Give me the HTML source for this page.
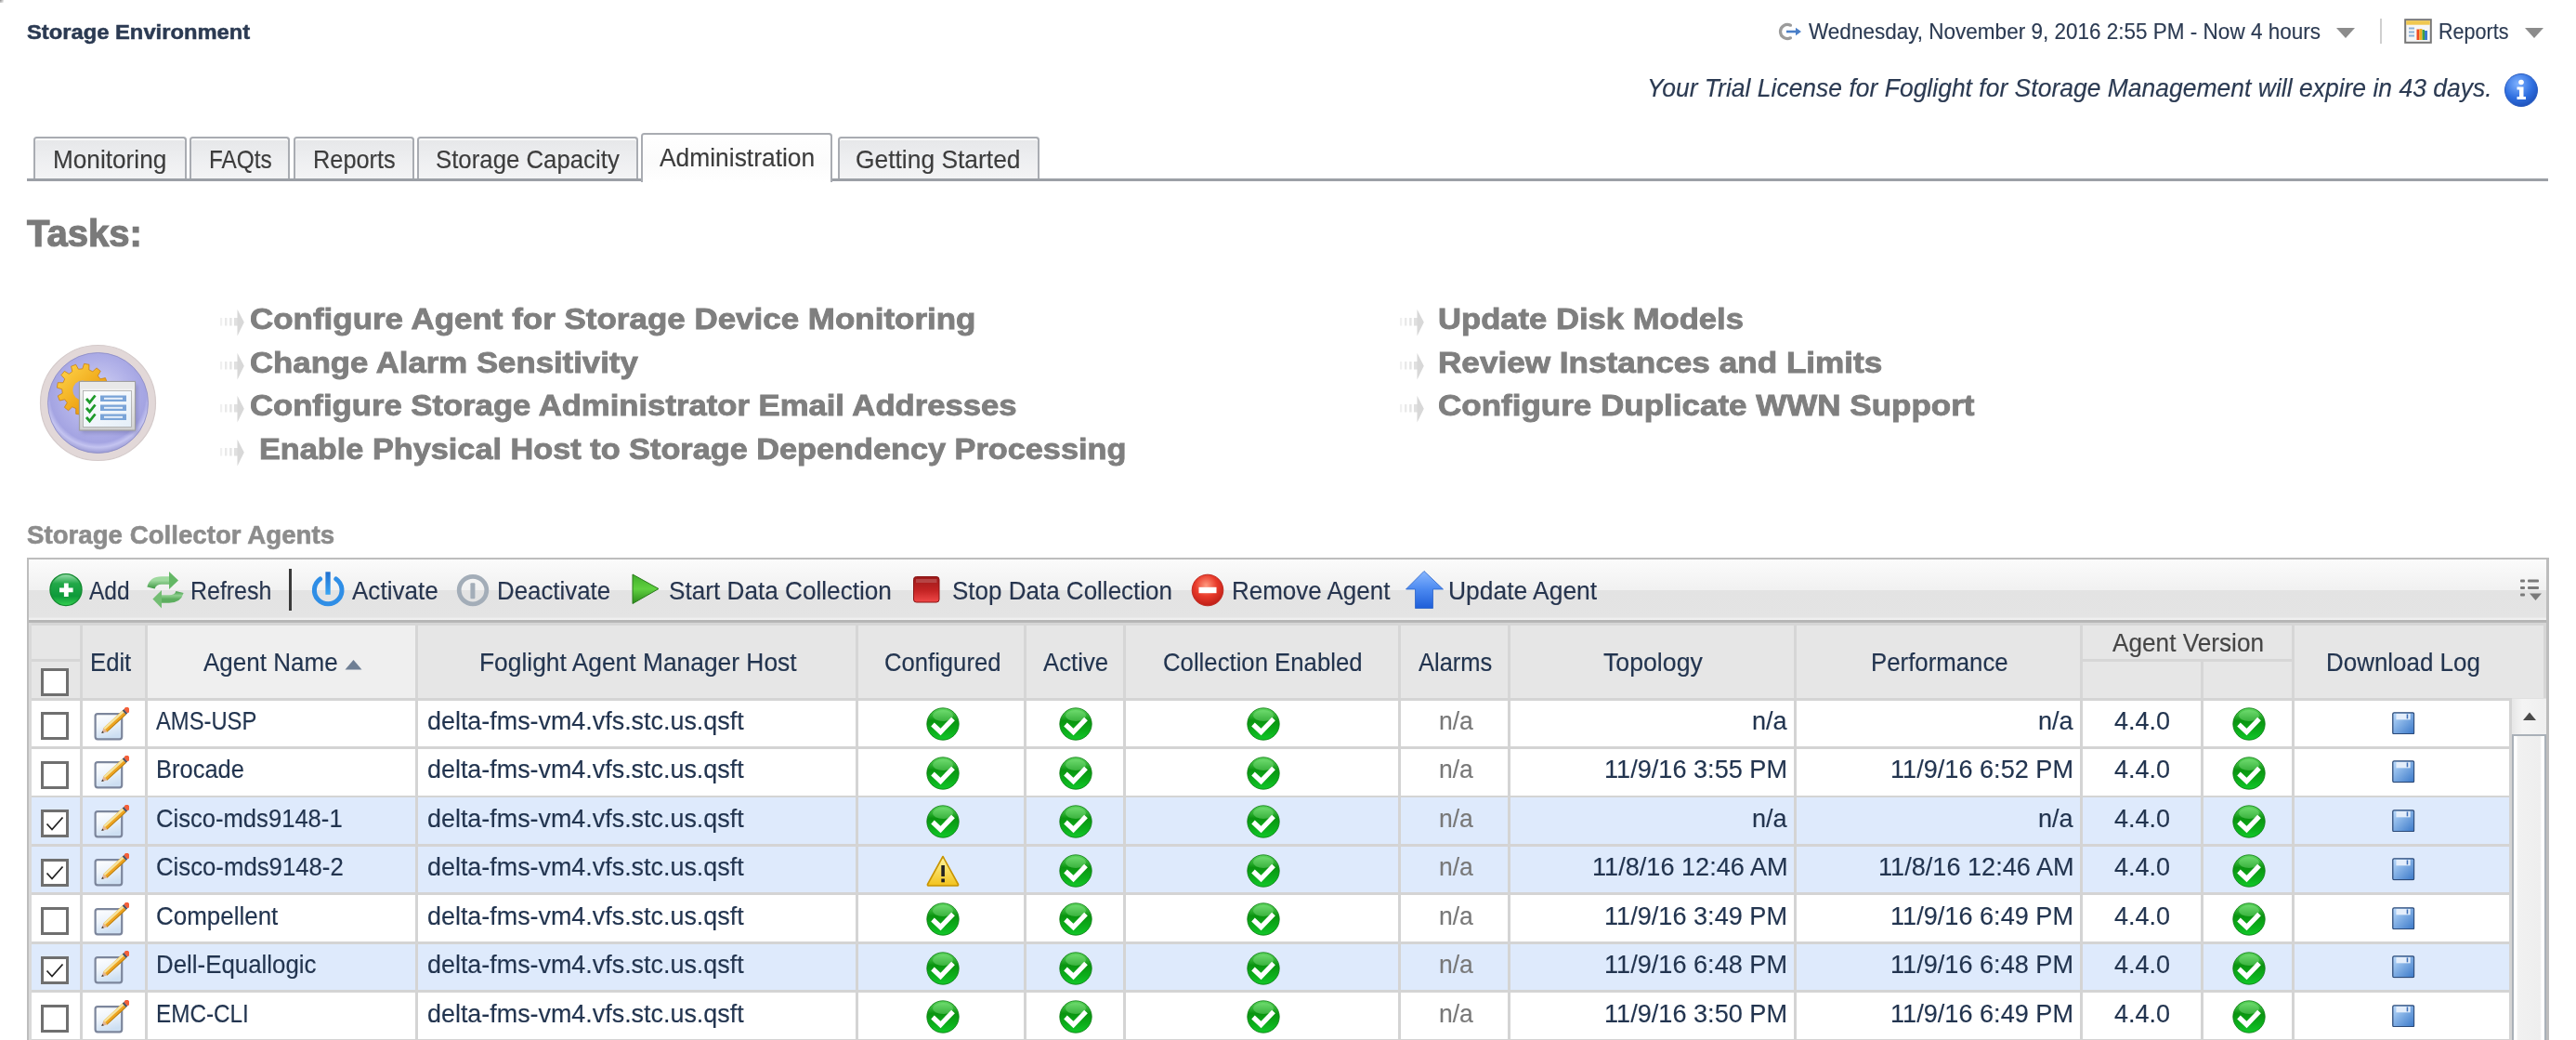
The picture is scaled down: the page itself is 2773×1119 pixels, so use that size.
<!DOCTYPE html>
<html><head><meta charset="utf-8"><title>Storage Environment</title>
<style>
html,body{margin:0;padding:0;background:#fff;}
body{width:2773px;height:1119px;overflow:hidden;position:relative;font-family:"Liberation Sans",sans-serif;}
.t{position:absolute;white-space:pre;}
</style></head><body>
<div style="position:absolute;left:0px;top:0px;width:4px;height:3px;background:radial-gradient(circle at 0 0,#888 0,#bbb 40%,rgba(255,255,255,0) 100%)"></div>
<div class="t" style="left:28.90px;top:23.80px;font-size:22.24px;line-height:22.24px;color:#2b3a52;font-weight:bold;transform:scaleX(1.0682);transform-origin:0 0;-webkit-text-stroke:0.5px #2b3a52;">Storage Environment</div>
<svg style="position:absolute;left:1914px;top:22px" width="28" height="24" viewBox="0 0 28 24">
<path d="M13.5 5.2 A7.6 7.6 0 1 0 13.5 18.8" fill="none" stroke="#8a8a8a" stroke-width="3.2" stroke-linecap="round" opacity="0.85"/>
<path d="M9 12 H21.5" stroke="#4a7fc8" stroke-width="2.6"/>
<path d="M19 7.8 L25 12 L19 16.2 Z" fill="#4a7fc8"/>
</svg>
<div class="t" style="left:1947.30px;top:22.00px;font-size:24.48px;line-height:24.48px;color:#2b3a52;transform:scaleX(0.9200);transform-origin:0 0;-webkit-text-stroke:0.15px #2b3a52;">Wednesday, November 9, 2016 2:55 PM - Now 4 hours</div>
<svg style="position:absolute;left:2514px;top:29px" width="22" height="13" viewBox="0 0 22 13"><path d="M1 1 H21 L11 12 Z" fill="#8c8c8c"/></svg>
<div style="position:absolute;left:2562px;top:20px;width:2px;height:27px;background:#cfcfcf"></div>
<svg style="position:absolute;left:2588px;top:20px" width="30" height="27" viewBox="0 0 30 27">
<rect x="1.2" y="1.2" width="27.6" height="24.6" fill="#f6f6f6" stroke="#767676" stroke-width="2"/>
<rect x="2.2" y="2.2" width="25.6" height="4.5" fill="#f0c850"/>
<rect x="5" y="9.5" width="6" height="2" fill="#8ab0d8"/><rect x="5" y="13.5" width="6" height="2" fill="#8ab0d8"/><rect x="5" y="17.5" width="6" height="2" fill="#8ab0d8"/>
<rect x="13.5" y="11.5" width="3" height="11.5" fill="#f04a20"/><rect x="16.5" y="11" width="3" height="12" fill="#f0b020"/><rect x="19.5" y="12" width="2.5" height="11" fill="#40a040"/><rect x="22" y="13" width="3" height="10" fill="#3a7ad0"/>
</svg>
<div class="t" style="left:2624.60px;top:22.00px;font-size:24.48px;line-height:24.48px;color:#2b3a52;transform:scaleX(0.8800);transform-origin:0 0;-webkit-text-stroke:0.15px #2b3a52;">Reports</div>
<svg style="position:absolute;left:2717px;top:29px" width="22" height="13" viewBox="0 0 22 13"><path d="M1 1 H21 L11 12 Z" fill="#8c8c8c"/></svg>
<div class="t" style="left:1773.30px;top:81.00px;font-size:28.05px;line-height:28.05px;color:#2b3a52;font-style:italic;transform:scaleX(0.9446);transform-origin:0 0;-webkit-text-stroke:0.15px #2b3a52;">Your Trial License for Foglight for Storage Management will expire in 43 days.</div>
<svg style="position:absolute;left:2695px;top:78px" width="38" height="38" viewBox="0 0 38 38">
<defs><radialGradient id="ig" cx="0.4" cy="0.3" r="0.75"><stop offset="0" stop-color="#7fb2ff"/><stop offset="0.6" stop-color="#2f6fe0"/><stop offset="1" stop-color="#1c4fb8"/></radialGradient></defs>
<circle cx="19" cy="19" r="17.5" fill="url(#ig)" stroke="#2a5cc0" stroke-width="1"/>
<circle cx="19" cy="10.5" r="2.8" fill="#fff"/>
<path d="M14.5 15.5 H21.5 V26 H24 V29 H14.5 V26 H17 V18.5 H14.5 Z" fill="#fff"/>
</svg>
<div style="position:absolute;left:36px;top:147.2px;width:160.7px;height:43.80000000000001px;border:2.5px solid #a9acb2;border-bottom:none;border-radius:3.5px 3.5px 0 0;background:linear-gradient(#e6e7e9,#eeeff1 55%,#f4f4f5);box-sizing:content-box;box-shadow:inset 0 2px 0 #fafafa"></div>
<div class="t" style="left:57.00px;top:158.00px;font-size:27.74px;line-height:27.74px;color:#3c3c3c;transform:scaleX(0.9441);transform-origin:0 0;-webkit-text-stroke:0.15px #3c3c3c;">Monitoring</div>
<div style="position:absolute;left:204px;top:147.2px;width:104px;height:43.80000000000001px;border:2.5px solid #a9acb2;border-bottom:none;border-radius:3.5px 3.5px 0 0;background:linear-gradient(#e6e7e9,#eeeff1 55%,#f4f4f5);box-sizing:content-box;box-shadow:inset 0 2px 0 #fafafa"></div>
<div class="t" style="left:224.70px;top:158.00px;font-size:27.74px;line-height:27.74px;color:#3c3c3c;transform:scaleX(0.8792);transform-origin:0 0;-webkit-text-stroke:0.15px #3c3c3c;">FAQts</div>
<div style="position:absolute;left:316.3px;top:147.2px;width:125.39999999999998px;height:43.80000000000001px;border:2.5px solid #a9acb2;border-bottom:none;border-radius:3.5px 3.5px 0 0;background:linear-gradient(#e6e7e9,#eeeff1 55%,#f4f4f5);box-sizing:content-box;box-shadow:inset 0 2px 0 #fafafa"></div>
<div class="t" style="left:337.30px;top:158.00px;font-size:27.74px;line-height:27.74px;color:#3c3c3c;transform:scaleX(0.9136);transform-origin:0 0;-webkit-text-stroke:0.15px #3c3c3c;">Reports</div>
<div style="position:absolute;left:449.4px;top:147.2px;width:233.20000000000005px;height:43.80000000000001px;border:2.5px solid #a9acb2;border-bottom:none;border-radius:3.5px 3.5px 0 0;background:linear-gradient(#e6e7e9,#eeeff1 55%,#f4f4f5);box-sizing:content-box;box-shadow:inset 0 2px 0 #fafafa"></div>
<div class="t" style="left:469.00px;top:158.00px;font-size:27.74px;line-height:27.74px;color:#3c3c3c;transform:scaleX(0.9297);transform-origin:0 0;-webkit-text-stroke:0.15px #3c3c3c;">Storage Capacity</div>
<div style="position:absolute;left:901.6px;top:147.2px;width:213.39999999999998px;height:43.80000000000001px;border:2.5px solid #a9acb2;border-bottom:none;border-radius:3.5px 3.5px 0 0;background:linear-gradient(#e6e7e9,#eeeff1 55%,#f4f4f5);box-sizing:content-box;box-shadow:inset 0 2px 0 #fafafa"></div>
<div class="t" style="left:921.00px;top:158.00px;font-size:27.74px;line-height:27.74px;color:#3c3c3c;transform:scaleX(0.9515);transform-origin:0 0;-webkit-text-stroke:0.15px #3c3c3c;">Getting Started</div>
<div style="position:absolute;left:29px;top:191.8px;width:2714px;height:3px;background:#9ca0a6"></div>
<div style="position:absolute;left:689.7px;top:142.6px;width:202.5999999999999px;height:51.400000000000006px;border:2.5px solid #a9acb2;border-bottom:none;border-radius:3.5px 3.5px 0 0;background:linear-gradient(#ffffff,#fbfbfb 60%,#ffffff);"></div>
<div class="t" style="left:709.50px;top:155.70px;font-size:28.05px;line-height:28.05px;color:#3c3c3c;transform:scaleX(0.9409);transform-origin:0 0;-webkit-text-stroke:0.15px #3c3c3c;">Administration</div>
<div class="t" style="left:28.90px;top:231.00px;font-size:40.8px;line-height:40.8px;color:#7a7a7a;font-weight:bold;transform:scaleX(0.9820);transform-origin:0 0;-webkit-text-stroke:1.2px #7a7a7a;">Tasks:</div>
<div class="t" style="left:269.00px;top:327.30px;font-size:32.13px;line-height:32.13px;color:#7f7f7f;font-weight:bold;transform:scaleX(1.0882);transform-origin:0 0;-webkit-text-stroke:0.9px #7f7f7f;">Configure Agent for Storage Device Monitoring</div>
<svg style="position:absolute;left:233.5px;top:330.3px" width="32" height="34" viewBox="0 0 32 34"><defs><filter id="abl0" x="-20%" y="-20%" width="140%" height="140%"><feGaussianBlur stdDeviation="0.55"/></filter></defs>
<g filter="url(#abl0)"><rect x="3" y="12" width="2.2" height="8.5" fill="#f0f0f0"/><rect x="8" y="12" width="2.4" height="8.5" fill="#e9e9e9"/><rect x="13.2" y="12" width="2.4" height="8.5" fill="#e4e4e4"/><rect x="18" y="12" width="4.5" height="8.5" fill="#e0e0e0"/>
<path d="M21.5 2.7 L28.8 16.8 L21.5 31.5 Z" fill="#d8d8d8"/></g></svg>
<div class="t" style="left:269.00px;top:373.50px;font-size:32.13px;line-height:32.13px;color:#7f7f7f;font-weight:bold;transform:scaleX(1.0816);transform-origin:0 0;-webkit-text-stroke:0.9px #7f7f7f;">Change Alarm Sensitivity</div>
<svg style="position:absolute;left:233.5px;top:376.5px" width="32" height="34" viewBox="0 0 32 34"><defs><filter id="abl1" x="-20%" y="-20%" width="140%" height="140%"><feGaussianBlur stdDeviation="0.55"/></filter></defs>
<g filter="url(#abl1)"><rect x="3" y="12" width="2.2" height="8.5" fill="#f0f0f0"/><rect x="8" y="12" width="2.4" height="8.5" fill="#e9e9e9"/><rect x="13.2" y="12" width="2.4" height="8.5" fill="#e4e4e4"/><rect x="18" y="12" width="4.5" height="8.5" fill="#e0e0e0"/>
<path d="M21.5 2.7 L28.8 16.8 L21.5 31.5 Z" fill="#d8d8d8"/></g></svg>
<div class="t" style="left:269.00px;top:419.70px;font-size:32.13px;line-height:32.13px;color:#7f7f7f;font-weight:bold;transform:scaleX(1.0789);transform-origin:0 0;-webkit-text-stroke:0.9px #7f7f7f;">Configure Storage Administrator Email Addresses</div>
<svg style="position:absolute;left:233.5px;top:422.7px" width="32" height="34" viewBox="0 0 32 34"><defs><filter id="abl2" x="-20%" y="-20%" width="140%" height="140%"><feGaussianBlur stdDeviation="0.55"/></filter></defs>
<g filter="url(#abl2)"><rect x="3" y="12" width="2.2" height="8.5" fill="#f0f0f0"/><rect x="8" y="12" width="2.4" height="8.5" fill="#e9e9e9"/><rect x="13.2" y="12" width="2.4" height="8.5" fill="#e4e4e4"/><rect x="18" y="12" width="4.5" height="8.5" fill="#e0e0e0"/>
<path d="M21.5 2.7 L28.8 16.8 L21.5 31.5 Z" fill="#d8d8d8"/></g></svg>
<div class="t" style="left:278.50px;top:466.50px;font-size:32.13px;line-height:32.13px;color:#7f7f7f;font-weight:bold;transform:scaleX(1.0670);transform-origin:0 0;-webkit-text-stroke:0.9px #7f7f7f;">Enable Physical Host to Storage Dependency Processing</div>
<svg style="position:absolute;left:233.5px;top:469.5px" width="32" height="34" viewBox="0 0 32 34"><defs><filter id="abl3" x="-20%" y="-20%" width="140%" height="140%"><feGaussianBlur stdDeviation="0.55"/></filter></defs>
<g filter="url(#abl3)"><rect x="3" y="12" width="2.2" height="8.5" fill="#f0f0f0"/><rect x="8" y="12" width="2.4" height="8.5" fill="#e9e9e9"/><rect x="13.2" y="12" width="2.4" height="8.5" fill="#e4e4e4"/><rect x="18" y="12" width="4.5" height="8.5" fill="#e0e0e0"/>
<path d="M21.5 2.7 L28.8 16.8 L21.5 31.5 Z" fill="#d8d8d8"/></g></svg>
<div class="t" style="left:1548.00px;top:327.30px;font-size:32.13px;line-height:32.13px;color:#7f7f7f;font-weight:bold;transform:scaleX(1.0775);transform-origin:0 0;-webkit-text-stroke:0.9px #7f7f7f;">Update Disk Models</div>
<svg style="position:absolute;left:1504.0px;top:330.3px" width="32" height="34" viewBox="0 0 32 34"><defs><filter id="abl4" x="-20%" y="-20%" width="140%" height="140%"><feGaussianBlur stdDeviation="0.55"/></filter></defs>
<g filter="url(#abl4)"><rect x="3" y="12" width="2.2" height="8.5" fill="#f0f0f0"/><rect x="8" y="12" width="2.4" height="8.5" fill="#e9e9e9"/><rect x="13.2" y="12" width="2.4" height="8.5" fill="#e4e4e4"/><rect x="18" y="12" width="4.5" height="8.5" fill="#e0e0e0"/>
<path d="M21.5 2.7 L28.8 16.8 L21.5 31.5 Z" fill="#d8d8d8"/></g></svg>
<div class="t" style="left:1548.00px;top:373.50px;font-size:32.13px;line-height:32.13px;color:#7f7f7f;font-weight:bold;transform:scaleX(1.0936);transform-origin:0 0;-webkit-text-stroke:0.9px #7f7f7f;">Review Instances and Limits</div>
<svg style="position:absolute;left:1504.0px;top:376.5px" width="32" height="34" viewBox="0 0 32 34"><defs><filter id="abl5" x="-20%" y="-20%" width="140%" height="140%"><feGaussianBlur stdDeviation="0.55"/></filter></defs>
<g filter="url(#abl5)"><rect x="3" y="12" width="2.2" height="8.5" fill="#f0f0f0"/><rect x="8" y="12" width="2.4" height="8.5" fill="#e9e9e9"/><rect x="13.2" y="12" width="2.4" height="8.5" fill="#e4e4e4"/><rect x="18" y="12" width="4.5" height="8.5" fill="#e0e0e0"/>
<path d="M21.5 2.7 L28.8 16.8 L21.5 31.5 Z" fill="#d8d8d8"/></g></svg>
<div class="t" style="left:1548.00px;top:419.70px;font-size:32.13px;line-height:32.13px;color:#7f7f7f;font-weight:bold;transform:scaleX(1.0895);transform-origin:0 0;-webkit-text-stroke:0.9px #7f7f7f;">Configure Duplicate WWN Support</div>
<svg style="position:absolute;left:1504.0px;top:422.7px" width="32" height="34" viewBox="0 0 32 34"><defs><filter id="abl6" x="-20%" y="-20%" width="140%" height="140%"><feGaussianBlur stdDeviation="0.55"/></filter></defs>
<g filter="url(#abl6)"><rect x="3" y="12" width="2.2" height="8.5" fill="#f0f0f0"/><rect x="8" y="12" width="2.4" height="8.5" fill="#e9e9e9"/><rect x="13.2" y="12" width="2.4" height="8.5" fill="#e4e4e4"/><rect x="18" y="12" width="4.5" height="8.5" fill="#e0e0e0"/>
<path d="M21.5 2.7 L28.8 16.8 L21.5 31.5 Z" fill="#d8d8d8"/></g></svg>
<div class="t" style="left:29.00px;top:560.60px;font-size:28.56px;line-height:28.56px;color:#8c8c8c;font-weight:bold;transform:scaleX(0.9692);transform-origin:0 0;-webkit-text-stroke:0.6px #8c8c8c;">Storage Collector Agents</div>
<svg style="position:absolute;left:41px;top:369px" width="130" height="130" viewBox="0 0 130 130">
<defs>
<radialGradient id="disc" cx="0.5" cy="0.42" r="0.58"><stop offset="0" stop-color="#d4d4f4"/><stop offset="0.6" stop-color="#b0b0e8"/><stop offset="0.82" stop-color="#a4a4e2"/><stop offset="0.9" stop-color="#c4c4f0"/><stop offset="1" stop-color="#9a9ad4"/></radialGradient>
<linearGradient id="gearg" x1="0" y1="0" x2="1" y2="1"><stop offset="0" stop-color="#ffd850"/><stop offset="0.6" stop-color="#f0a818"/><stop offset="1" stop-color="#d88000"/></linearGradient>
<linearGradient id="win" x1="0" y1="0" x2="0" y2="1"><stop offset="0" stop-color="#f8f8f8"/><stop offset="1" stop-color="#d0d0d0"/></linearGradient>
<linearGradient id="winin" x1="0" y1="0" x2="1" y2="1"><stop offset="0" stop-color="#ffffff"/><stop offset="1" stop-color="#e4eef8"/></linearGradient>
<filter id="wsh" x="-20%" y="-20%" width="150%" height="150%"><feGaussianBlur stdDeviation="2"/></filter>
</defs>
<circle cx="64.5" cy="64.5" r="62" fill="#e2d8d8" stroke="#d4caca" stroke-width="1.2"/>
<circle cx="64.5" cy="64.5" r="54" fill="url(#disc)" stroke="#8a8ac4" stroke-width="0.8"/>
<path d="M69.80 49.80 L75.25 51.53 L74.36 56.92 L68.65 56.82 L66.85 60.80 L70.71 65.02 L67.25 69.25 L62.35 66.30 L58.80 68.85 L60.03 74.43 L54.92 76.36 L52.15 71.37 L47.80 71.80 L46.07 77.25 L40.68 76.36 L40.78 70.65 L36.80 68.85 L32.58 72.71 L28.35 69.25 L31.30 64.35 L28.75 60.80 L23.17 62.03 L21.24 56.92 L26.23 54.15 L25.80 49.80 L20.35 48.07 L21.24 42.68 L26.95 42.78 L28.75 38.80 L24.89 34.58 L28.35 30.35 L33.25 33.30 L36.80 30.75 L35.57 25.17 L40.68 23.24 L43.45 28.23 L47.80 27.80 L49.53 22.35 L54.92 23.24 L54.82 28.95 L58.80 30.75 L63.02 26.89 L67.25 30.35 L64.30 35.25 L66.85 38.80 L72.43 37.57 L74.36 42.68 L69.37 45.45 Z" fill="url(#gearg)" stroke="#c87a00" stroke-width="0.7"/>
<circle cx="47.8" cy="51" r="10.5" fill="#a8a8e0"/>
<rect x="47" y="45" width="60" height="52" fill="#6a6aa0" opacity="0.45" filter="url(#wsh)"/>
<rect x="44.5" y="41.5" width="60" height="52.5" fill="url(#win)" stroke="#a0a0a0" stroke-width="1.2"/>
<rect x="45.5" y="42.5" width="58" height="7" fill="#e8e8e8"/>
<rect x="48.5" y="51.5" width="52" height="39" fill="url(#winin)" stroke="#a8a8a8" stroke-width="0.8"/>
<path d="M52 60 L55.5 64 L61.5 56.5" fill="none" stroke="#1e9a2a" stroke-width="2.8"/>
<path d="M52 70 L55.5 74 L61.5 66.5" fill="none" stroke="#1e9a2a" stroke-width="2.8"/>
<path d="M52 80 L55.5 84 L61.5 76.5" fill="none" stroke="#1e9a2a" stroke-width="2.8"/>
<rect x="67" y="56.5" width="28" height="6.5" fill="#7aa4d8"/><rect x="71" y="58.8" width="20" height="2" fill="#e8f0fa"/>
<rect x="67" y="66.5" width="28" height="6.5" fill="#7aa4d8"/><rect x="71" y="68.8" width="20" height="2" fill="#e8f0fa"/>
<rect x="67" y="76.5" width="28" height="6.5" fill="#7aa4d8"/><rect x="71" y="78.8" width="20" height="2" fill="#e8f0fa"/>
</svg>
<div style="position:absolute;left:29px;top:600px;width:2711px;height:519px;border:2px solid #bdbdbd;border-bottom:none;background:#fff;box-sizing:content-box"></div>
<div style="position:absolute;left:31px;top:602px;width:2710px;height:65px;background:linear-gradient(#fbfbfb 0%,#f1f1f1 50.5%,#e3e3e3 51.5%,#e4e4e4 95%,#f0f0f0 98%,#f4f4f4 100%)"></div>
<div style="position:absolute;left:31px;top:667px;width:2710px;height:3px;background:#b6b6b6"></div>
<div class="t" style="left:96.30px;top:622.00px;font-size:28.05px;line-height:28.05px;color:#26344e;transform:scaleX(0.8752);transform-origin:0 0;-webkit-text-stroke:0.15px #26344e;">Add</div>
<div class="t" style="left:205.00px;top:622.00px;font-size:28.05px;line-height:28.05px;color:#26344e;transform:scaleX(0.8892);transform-origin:0 0;-webkit-text-stroke:0.15px #26344e;">Refresh</div>
<div class="t" style="left:378.70px;top:622.00px;font-size:28.05px;line-height:28.05px;color:#26344e;transform:scaleX(0.9286);transform-origin:0 0;-webkit-text-stroke:0.15px #26344e;">Activate</div>
<div class="t" style="left:535.40px;top:622.00px;font-size:28.05px;line-height:28.05px;color:#26344e;transform:scaleX(0.9213);transform-origin:0 0;-webkit-text-stroke:0.15px #26344e;">Deactivate</div>
<div class="t" style="left:720.40px;top:622.00px;font-size:28.05px;line-height:28.05px;color:#26344e;transform:scaleX(0.9327);transform-origin:0 0;-webkit-text-stroke:0.15px #26344e;">Start Data Collection</div>
<div class="t" style="left:1024.60px;top:622.00px;font-size:28.05px;line-height:28.05px;color:#26344e;transform:scaleX(0.9270);transform-origin:0 0;-webkit-text-stroke:0.15px #26344e;">Stop Data Collection</div>
<div class="t" style="left:1326.00px;top:622.00px;font-size:28.05px;line-height:28.05px;color:#26344e;transform:scaleX(0.9260);transform-origin:0 0;-webkit-text-stroke:0.15px #26344e;">Remove Agent</div>
<div class="t" style="left:1558.90px;top:622.00px;font-size:28.05px;line-height:28.05px;color:#26344e;transform:scaleX(0.9419);transform-origin:0 0;-webkit-text-stroke:0.15px #26344e;">Update Agent</div>
<div style="position:absolute;left:311px;top:612px;width:3px;height:45px;background:#3a3a3a"></div>
<svg style="position:absolute;left:2712px;top:622px" width="26" height="26" viewBox="0 0 26 26"><g fill="#7a7a7a"><rect x="1" y="1.5" width="5" height="3" rx="1"/><rect x="9" y="1.5" width="12" height="3" rx="1"/>
<rect x="1" y="9" width="5" height="3" rx="1"/><rect x="9" y="9" width="12" height="3" rx="1"/>
<rect x="1" y="16.5" width="5" height="3" rx="1"/><path d="M11 16.5 H24 L17.5 24 Z"/></g></svg>
<div style="position:absolute;left:31px;top:670px;width:2710px;height:81.14999999999998px;background:#e6e6e6"></div>
<div style="position:absolute;left:31px;top:670px;width:2710px;height:3px;background:#d6d6d6"></div>
<div style="position:absolute;left:158.8px;top:673px;width:288.3px;height:78.14999999999998px;background:#efefef"></div>
<div style="position:absolute;left:86.15px;top:670px;width:2.8px;height:81.14999999999998px;background:#d6d6d6"></div>
<div style="position:absolute;left:156px;top:670px;width:2.8px;height:81.14999999999998px;background:#d6d6d6"></div>
<div style="position:absolute;left:447.1px;top:670px;width:2.8px;height:81.14999999999998px;background:#d6d6d6"></div>
<div style="position:absolute;left:921.1px;top:670px;width:2.8px;height:81.14999999999998px;background:#d6d6d6"></div>
<div style="position:absolute;left:1102.2px;top:670px;width:2.8px;height:81.14999999999998px;background:#d6d6d6"></div>
<div style="position:absolute;left:1209.1px;top:670px;width:2.8px;height:81.14999999999998px;background:#d6d6d6"></div>
<div style="position:absolute;left:1505px;top:670px;width:2.8px;height:81.14999999999998px;background:#d6d6d6"></div>
<div style="position:absolute;left:1623px;top:670px;width:2.8px;height:81.14999999999998px;background:#d6d6d6"></div>
<div style="position:absolute;left:1931px;top:670px;width:2.8px;height:81.14999999999998px;background:#d6d6d6"></div>
<div style="position:absolute;left:2239px;top:670px;width:2.8px;height:81.14999999999998px;background:#d6d6d6"></div>
<div style="position:absolute;left:2369px;top:709px;width:2.8px;height:42.14999999999998px;background:#d6d6d6"></div>
<div style="position:absolute;left:2467px;top:670px;width:2.8px;height:81.14999999999998px;background:#d6d6d6"></div>
<div style="position:absolute;left:31px;top:670px;width:3px;height:81.14999999999998px;background:#d9d9d9"></div>
<div style="position:absolute;left:2738px;top:670px;width:3px;height:81.14999999999998px;background:#d6d6d6"></div>
<div style="position:absolute;left:34px;top:709px;width:52px;height:2.5px;background:#d6d6d6"></div>
<div style="position:absolute;left:2240px;top:709px;width:228px;height:2.5px;background:#d6d6d6"></div>
<div class="t" style="left:97.00px;top:699.00px;font-size:28.05px;line-height:28.05px;color:#22344f;transform:scaleX(0.9155);transform-origin:0 0;-webkit-text-stroke:0.15px #22344f;">Edit</div>
<div class="t" style="left:219.30px;top:699.00px;font-size:28.05px;line-height:28.05px;color:#22344f;transform:scaleX(0.9278);transform-origin:0 0;-webkit-text-stroke:0.15px #22344f;">Agent Name</div>
<div class="t" style="left:516.30px;top:699.00px;font-size:28.05px;line-height:28.05px;color:#22344f;transform:scaleX(0.9403);transform-origin:0 0;-webkit-text-stroke:0.15px #22344f;">Foglight Agent Manager Host</div>
<div class="t" style="left:951.80px;top:699.00px;font-size:28.05px;line-height:28.05px;color:#22344f;transform:scaleX(0.9142);transform-origin:0 0;-webkit-text-stroke:0.15px #22344f;">Configured</div>
<div class="t" style="left:1123.30px;top:699.00px;font-size:28.05px;line-height:28.05px;color:#22344f;transform:scaleX(0.9171);transform-origin:0 0;-webkit-text-stroke:0.15px #22344f;">Active</div>
<div class="t" style="left:1251.70px;top:699.00px;font-size:28.05px;line-height:28.05px;color:#22344f;transform:scaleX(0.9173);transform-origin:0 0;-webkit-text-stroke:0.15px #22344f;">Collection Enabled</div>
<div class="t" style="left:1527.10px;top:699.00px;font-size:28.05px;line-height:28.05px;color:#22344f;transform:scaleX(0.9090);transform-origin:0 0;-webkit-text-stroke:0.15px #22344f;">Alarms</div>
<div class="t" style="left:1726.30px;top:699.00px;font-size:28.05px;line-height:28.05px;color:#22344f;transform:scaleX(0.9516);transform-origin:0 0;-webkit-text-stroke:0.15px #22344f;">Topology</div>
<div class="t" style="left:2014.00px;top:699.00px;font-size:28.05px;line-height:28.05px;color:#22344f;transform:scaleX(0.9198);transform-origin:0 0;-webkit-text-stroke:0.15px #22344f;">Performance</div>
<div class="t" style="left:2503.90px;top:699.00px;font-size:28.05px;line-height:28.05px;color:#22344f;transform:scaleX(0.9249);transform-origin:0 0;-webkit-text-stroke:0.15px #22344f;">Download Log</div>
<div class="t" style="left:2273.90px;top:678.00px;font-size:28.05px;line-height:28.05px;color:#454545;transform:scaleX(0.9335);transform-origin:0 0;-webkit-text-stroke:0.15px #454545;">Agent Version</div>
<div style="position:absolute;left:31px;top:751.15px;width:2670px;height:2.7px;background:#d4d4d4"></div>
<div style="position:absolute;left:2701px;top:751.15px;width:40px;height:2.8px;background:#e0e0e0"></div>
<svg style="position:absolute;left:371px;top:709px" width="19" height="12" viewBox="0 0 19 12"><path d="M0.5 11.5 L9.5 1 L18.5 11.5 Z" fill="#6f7f94"/></svg>
<svg width="0" height="0" style="position:absolute"><defs>
<linearGradient id="gck" x1="0" y1="0" x2="0" y2="1"><stop offset="0" stop-color="#62d862"/><stop offset="0.4" stop-color="#0a9410"/><stop offset="0.75" stop-color="#0cb01c"/><stop offset="1" stop-color="#12c82a"/></linearGradient>
<linearGradient id="gwarn" x1="0" y1="0" x2="0" y2="1"><stop offset="0" stop-color="#fff6a0"/><stop offset="1" stop-color="#f2c21c"/></linearGradient>
<linearGradient id="gdl" x1="0" y1="0" x2="1" y2="1"><stop offset="0" stop-color="#bcdcfc"/><stop offset="1" stop-color="#3a78c8"/></linearGradient>
<symbol id="ck" viewBox="0 0 36 36"><circle cx="18" cy="18" r="17.2" fill="url(#gck)" stroke="#0b7a12" stroke-width="0.8"/><ellipse cx="18" cy="9" rx="11" ry="6" fill="#9af09a" opacity="0.35"/><path d="M7 18.5 L15.5 26.5 L29 12.5" fill="none" stroke="#fff" stroke-width="5.2" stroke-linecap="butt" stroke-linejoin="miter"/></symbol>
<symbol id="warn" viewBox="0 0 36 34"><path d="M18 1.5 L34.5 31.5 Q35 33 33 33 H3 Q1 33 1.5 31.5 Z" fill="url(#gwarn)" stroke="#c89400" stroke-width="1.6" stroke-linejoin="round"/><rect x="16.3" y="11" width="3.6" height="12" fill="#222"/><rect x="16.3" y="25.5" width="3.6" height="3.8" fill="#222"/></symbol>
<linearGradient id="gedit" x1="0" y1="0" x2="0.3" y2="1"><stop offset="0" stop-color="#ffffff"/><stop offset="0.5" stop-color="#eef4fb"/><stop offset="1" stop-color="#cddff2"/></linearGradient>
<symbol id="edit" viewBox="0 0 38 36"><rect x="1.6" y="7.1" width="28.6" height="27.2" rx="2.5" fill="url(#gedit)" stroke="#7c869c" stroke-width="2.2"/>
<g transform="translate(8.3 28) rotate(-42.4)">
<path d="M0 0 L5.5 -2.9 L5.5 2.9 Z" fill="#e2b496"/><path d="M0 0 L2.4 -1.3 L2.4 1.3 Z" fill="#333"/>
<rect x="5.5" y="-2.9" width="27.5" height="5.8" fill="#eea420"/><rect x="5.5" y="-2.8" width="27.5" height="2.4" fill="#f4e4a0"/>
<rect x="5.5" y="2.2" width="27.5" height="0.8" fill="#b07810"/>
<rect x="33" y="-2.9" width="2.4" height="5.8" fill="#4a5262"/><rect x="35.2" y="-3.2" width="4.8" height="6.4" rx="1.6" fill="#f4603a"/></g></symbol>
<symbol id="dl" viewBox="0 0 25 25"><rect x="0.8" y="0.8" width="23.4" height="23.4" rx="1.5" fill="url(#gdl)" stroke="#2c4a78" stroke-width="1.3"/><rect x="4.5" y="2" width="15.5" height="6.5" fill="#e4eefb"/><rect x="16" y="2.5" width="1.6" height="5" fill="#3d6fb8"/></symbol>
<symbol id="cb" viewBox="0 0 30 30"><rect x="1.5" y="1.5" width="27" height="27" fill="#fff" stroke="#6f6f6f" stroke-width="3"/></symbol>
<symbol id="cbc" viewBox="0 0 30 30"><rect x="1.5" y="1.5" width="27" height="27" fill="#fff" stroke="#6f6f6f" stroke-width="3"/><path d="M6.5 15.5 L12 21.5 L23.5 8.5" fill="none" stroke="#222" stroke-width="1.8"/></symbol>
</defs></svg>
<div style="position:absolute;left:34px;top:753.85px;width:2667px;height:49.25px;background:#ffffff"></div>
<div style="position:absolute;left:31px;top:803.1px;width:2670px;height:2.7px;background:#d4d4d4"></div>
<div style="position:absolute;left:31px;top:751.15px;width:3px;height:54.65px;background:#d9d9d9"></div>
<div style="position:absolute;left:86.15px;top:751.15px;width:2.8px;height:54.65px;background:#d4d4d4"></div>
<div style="position:absolute;left:156px;top:751.15px;width:2.8px;height:54.65px;background:#d4d4d4"></div>
<div style="position:absolute;left:447.1px;top:751.15px;width:2.8px;height:54.65px;background:#d4d4d4"></div>
<div style="position:absolute;left:921.1px;top:751.15px;width:2.8px;height:54.65px;background:#d4d4d4"></div>
<div style="position:absolute;left:1102.2px;top:751.15px;width:2.8px;height:54.65px;background:#d4d4d4"></div>
<div style="position:absolute;left:1209.1px;top:751.15px;width:2.8px;height:54.65px;background:#d4d4d4"></div>
<div style="position:absolute;left:1505px;top:751.15px;width:2.8px;height:54.65px;background:#d4d4d4"></div>
<div style="position:absolute;left:1623px;top:751.15px;width:2.8px;height:54.65px;background:#d4d4d4"></div>
<div style="position:absolute;left:1931px;top:751.15px;width:2.8px;height:54.65px;background:#d4d4d4"></div>
<div style="position:absolute;left:2239px;top:751.15px;width:2.8px;height:54.65px;background:#d4d4d4"></div>
<div style="position:absolute;left:2369px;top:751.15px;width:2.8px;height:54.65px;background:#d4d4d4"></div>
<div style="position:absolute;left:2467px;top:751.15px;width:2.8px;height:54.65px;background:#d4d4d4"></div>
<div style="position:absolute;left:2701px;top:751.15px;width:2.8px;height:54.65px;background:#d4d4d4"></div>
<div class="t" style="left:168.20px;top:761.90px;font-size:28.05px;line-height:28.05px;color:#22344f;transform:scaleX(0.8476);transform-origin:0 0;-webkit-text-stroke:0.15px #22344f;">AMS-USP</div>
<div class="t" style="left:460.00px;top:761.90px;font-size:28.05px;line-height:28.05px;color:#22344f;transform:scaleX(0.9587);transform-origin:0 0;-webkit-text-stroke:0.15px #22344f;">delta-fms-vm4.vfs.stc.us.qsft</div>
<div class="t" style="left:1548.60px;top:761.90px;font-size:28.05px;line-height:28.05px;color:#787878;transform:scaleX(0.9456);transform-origin:0 0;-webkit-text-stroke:0.15px #787878;">n/a</div>
<div class="t" style="left:2276.40px;top:761.90px;font-size:28.05px;line-height:28.05px;color:#22344f;transform:scaleX(0.9630);transform-origin:0 0;-webkit-text-stroke:0.15px #22344f;">4.4.0</div>
<div class="t" style="left:1886.46px;top:761.90px;font-size:28.05px;line-height:28.05px;color:#22344f;transform:scaleX(0.9670);transform-origin:0 0;-webkit-text-stroke:0.15px #22344f;">n/a</div>
<div class="t" style="left:2194.36px;top:761.90px;font-size:28.05px;line-height:28.05px;color:#22344f;transform:scaleX(0.9670);transform-origin:0 0;-webkit-text-stroke:0.15px #22344f;">n/a</div>
<svg style="position:absolute;left:44.00px;top:766.20px" width="30" height="30"><use href="#cb"/></svg>
<svg style="position:absolute;left:101.00px;top:760.50px" width="38" height="36"><use href="#edit"/></svg>
<svg style="position:absolute;left:997.30px;top:761.10px" width="36" height="36"><use href="#ck"/></svg>
<svg style="position:absolute;left:1140.30px;top:761.10px" width="36" height="36"><use href="#ck"/></svg>
<svg style="position:absolute;left:1342.30px;top:761.10px" width="36" height="36"><use href="#ck"/></svg>
<svg style="position:absolute;left:2403.30px;top:761.10px" width="36" height="36"><use href="#ck"/></svg>
<svg style="position:absolute;left:2575.00px;top:765.50px" width="24.5" height="24.5"><use href="#dl"/></svg>
<div style="position:absolute;left:34px;top:805.8000000000001px;width:2667px;height:49.75px;background:#ffffff"></div>
<div style="position:absolute;left:31px;top:855.5500000000001px;width:2670px;height:2.7px;background:#d4d4d4"></div>
<div style="position:absolute;left:31px;top:803.1px;width:3px;height:55.15px;background:#d9d9d9"></div>
<div style="position:absolute;left:86.15px;top:803.1px;width:2.8px;height:55.15px;background:#d4d4d4"></div>
<div style="position:absolute;left:156px;top:803.1px;width:2.8px;height:55.15px;background:#d4d4d4"></div>
<div style="position:absolute;left:447.1px;top:803.1px;width:2.8px;height:55.15px;background:#d4d4d4"></div>
<div style="position:absolute;left:921.1px;top:803.1px;width:2.8px;height:55.15px;background:#d4d4d4"></div>
<div style="position:absolute;left:1102.2px;top:803.1px;width:2.8px;height:55.15px;background:#d4d4d4"></div>
<div style="position:absolute;left:1209.1px;top:803.1px;width:2.8px;height:55.15px;background:#d4d4d4"></div>
<div style="position:absolute;left:1505px;top:803.1px;width:2.8px;height:55.15px;background:#d4d4d4"></div>
<div style="position:absolute;left:1623px;top:803.1px;width:2.8px;height:55.15px;background:#d4d4d4"></div>
<div style="position:absolute;left:1931px;top:803.1px;width:2.8px;height:55.15px;background:#d4d4d4"></div>
<div style="position:absolute;left:2239px;top:803.1px;width:2.8px;height:55.15px;background:#d4d4d4"></div>
<div style="position:absolute;left:2369px;top:803.1px;width:2.8px;height:55.15px;background:#d4d4d4"></div>
<div style="position:absolute;left:2467px;top:803.1px;width:2.8px;height:55.15px;background:#d4d4d4"></div>
<div style="position:absolute;left:2701px;top:803.1px;width:2.8px;height:55.15px;background:#d4d4d4"></div>
<div class="t" style="left:168.20px;top:814.40px;font-size:28.05px;line-height:28.05px;color:#22344f;transform:scaleX(0.9083);transform-origin:0 0;-webkit-text-stroke:0.15px #22344f;">Brocade</div>
<div class="t" style="left:460.00px;top:814.40px;font-size:28.05px;line-height:28.05px;color:#22344f;transform:scaleX(0.9587);transform-origin:0 0;-webkit-text-stroke:0.15px #22344f;">delta-fms-vm4.vfs.stc.us.qsft</div>
<div class="t" style="left:1548.60px;top:814.40px;font-size:28.05px;line-height:28.05px;color:#787878;transform:scaleX(0.9456);transform-origin:0 0;-webkit-text-stroke:0.15px #787878;">n/a</div>
<div class="t" style="left:2276.40px;top:814.40px;font-size:28.05px;line-height:28.05px;color:#22344f;transform:scaleX(0.9630);transform-origin:0 0;-webkit-text-stroke:0.15px #22344f;">4.4.0</div>
<div class="t" style="left:1727.24px;top:814.40px;font-size:28.05px;line-height:28.05px;color:#22344f;transform:scaleX(0.9670);transform-origin:0 0;-webkit-text-stroke:0.15px #22344f;">11/9/16 3:55 PM</div>
<div class="t" style="left:2035.14px;top:814.40px;font-size:28.05px;line-height:28.05px;color:#22344f;transform:scaleX(0.9670);transform-origin:0 0;-webkit-text-stroke:0.15px #22344f;">11/9/16 6:52 PM</div>
<svg style="position:absolute;left:44.00px;top:818.70px" width="30" height="30"><use href="#cb"/></svg>
<svg style="position:absolute;left:101.00px;top:813.00px" width="38" height="36"><use href="#edit"/></svg>
<svg style="position:absolute;left:997.30px;top:813.60px" width="36" height="36"><use href="#ck"/></svg>
<svg style="position:absolute;left:1140.30px;top:813.60px" width="36" height="36"><use href="#ck"/></svg>
<svg style="position:absolute;left:1342.30px;top:813.60px" width="36" height="36"><use href="#ck"/></svg>
<svg style="position:absolute;left:2403.30px;top:813.60px" width="36" height="36"><use href="#ck"/></svg>
<svg style="position:absolute;left:2575.00px;top:818.00px" width="24.5" height="24.5"><use href="#dl"/></svg>
<div style="position:absolute;left:34px;top:858.2500000000001px;width:2667px;height:49.749999999999886px;background:#deeafc"></div>
<div style="position:absolute;left:31px;top:908.0px;width:2670px;height:2.7px;background:#d4d4d4"></div>
<div style="position:absolute;left:31px;top:855.5500000000001px;width:3px;height:55.149999999999885px;background:#d9d9d9"></div>
<div style="position:absolute;left:86.15px;top:855.5500000000001px;width:2.8px;height:55.149999999999885px;background:#d4d4d4"></div>
<div style="position:absolute;left:156px;top:855.5500000000001px;width:2.8px;height:55.149999999999885px;background:#d4d4d4"></div>
<div style="position:absolute;left:447.1px;top:855.5500000000001px;width:2.8px;height:55.149999999999885px;background:#d4d4d4"></div>
<div style="position:absolute;left:921.1px;top:855.5500000000001px;width:2.8px;height:55.149999999999885px;background:#d4d4d4"></div>
<div style="position:absolute;left:1102.2px;top:855.5500000000001px;width:2.8px;height:55.149999999999885px;background:#d4d4d4"></div>
<div style="position:absolute;left:1209.1px;top:855.5500000000001px;width:2.8px;height:55.149999999999885px;background:#d4d4d4"></div>
<div style="position:absolute;left:1505px;top:855.5500000000001px;width:2.8px;height:55.149999999999885px;background:#d4d4d4"></div>
<div style="position:absolute;left:1623px;top:855.5500000000001px;width:2.8px;height:55.149999999999885px;background:#d4d4d4"></div>
<div style="position:absolute;left:1931px;top:855.5500000000001px;width:2.8px;height:55.149999999999885px;background:#d4d4d4"></div>
<div style="position:absolute;left:2239px;top:855.5500000000001px;width:2.8px;height:55.149999999999885px;background:#d4d4d4"></div>
<div style="position:absolute;left:2369px;top:855.5500000000001px;width:2.8px;height:55.149999999999885px;background:#d4d4d4"></div>
<div style="position:absolute;left:2467px;top:855.5500000000001px;width:2.8px;height:55.149999999999885px;background:#d4d4d4"></div>
<div style="position:absolute;left:2701px;top:855.5500000000001px;width:2.8px;height:55.149999999999885px;background:#d4d4d4"></div>
<div class="t" style="left:168.20px;top:866.90px;font-size:28.05px;line-height:28.05px;color:#22344f;transform:scaleX(0.9128);transform-origin:0 0;-webkit-text-stroke:0.15px #22344f;">Cisco-mds9148-1</div>
<div class="t" style="left:460.00px;top:866.90px;font-size:28.05px;line-height:28.05px;color:#22344f;transform:scaleX(0.9587);transform-origin:0 0;-webkit-text-stroke:0.15px #22344f;">delta-fms-vm4.vfs.stc.us.qsft</div>
<div class="t" style="left:1548.60px;top:866.90px;font-size:28.05px;line-height:28.05px;color:#787878;transform:scaleX(0.9456);transform-origin:0 0;-webkit-text-stroke:0.15px #787878;">n/a</div>
<div class="t" style="left:2276.40px;top:866.90px;font-size:28.05px;line-height:28.05px;color:#22344f;transform:scaleX(0.9630);transform-origin:0 0;-webkit-text-stroke:0.15px #22344f;">4.4.0</div>
<div class="t" style="left:1886.46px;top:866.90px;font-size:28.05px;line-height:28.05px;color:#22344f;transform:scaleX(0.9670);transform-origin:0 0;-webkit-text-stroke:0.15px #22344f;">n/a</div>
<div class="t" style="left:2194.36px;top:866.90px;font-size:28.05px;line-height:28.05px;color:#22344f;transform:scaleX(0.9670);transform-origin:0 0;-webkit-text-stroke:0.15px #22344f;">n/a</div>
<svg style="position:absolute;left:44.00px;top:871.20px" width="30" height="30"><use href="#cbc"/></svg>
<svg style="position:absolute;left:101.00px;top:865.50px" width="38" height="36"><use href="#edit"/></svg>
<svg style="position:absolute;left:997.30px;top:866.10px" width="36" height="36"><use href="#ck"/></svg>
<svg style="position:absolute;left:1140.30px;top:866.10px" width="36" height="36"><use href="#ck"/></svg>
<svg style="position:absolute;left:1342.30px;top:866.10px" width="36" height="36"><use href="#ck"/></svg>
<svg style="position:absolute;left:2403.30px;top:866.10px" width="36" height="36"><use href="#ck"/></svg>
<svg style="position:absolute;left:2575.00px;top:870.50px" width="24.5" height="24.5"><use href="#dl"/></svg>
<div style="position:absolute;left:34px;top:910.7px;width:2667px;height:49.75px;background:#deeafc"></div>
<div style="position:absolute;left:31px;top:960.45px;width:2670px;height:2.7px;background:#d4d4d4"></div>
<div style="position:absolute;left:31px;top:908.0px;width:3px;height:55.15px;background:#d9d9d9"></div>
<div style="position:absolute;left:86.15px;top:908.0px;width:2.8px;height:55.15px;background:#d4d4d4"></div>
<div style="position:absolute;left:156px;top:908.0px;width:2.8px;height:55.15px;background:#d4d4d4"></div>
<div style="position:absolute;left:447.1px;top:908.0px;width:2.8px;height:55.15px;background:#d4d4d4"></div>
<div style="position:absolute;left:921.1px;top:908.0px;width:2.8px;height:55.15px;background:#d4d4d4"></div>
<div style="position:absolute;left:1102.2px;top:908.0px;width:2.8px;height:55.15px;background:#d4d4d4"></div>
<div style="position:absolute;left:1209.1px;top:908.0px;width:2.8px;height:55.15px;background:#d4d4d4"></div>
<div style="position:absolute;left:1505px;top:908.0px;width:2.8px;height:55.15px;background:#d4d4d4"></div>
<div style="position:absolute;left:1623px;top:908.0px;width:2.8px;height:55.15px;background:#d4d4d4"></div>
<div style="position:absolute;left:1931px;top:908.0px;width:2.8px;height:55.15px;background:#d4d4d4"></div>
<div style="position:absolute;left:2239px;top:908.0px;width:2.8px;height:55.15px;background:#d4d4d4"></div>
<div style="position:absolute;left:2369px;top:908.0px;width:2.8px;height:55.15px;background:#d4d4d4"></div>
<div style="position:absolute;left:2467px;top:908.0px;width:2.8px;height:55.15px;background:#d4d4d4"></div>
<div style="position:absolute;left:2701px;top:908.0px;width:2.8px;height:55.15px;background:#d4d4d4"></div>
<div class="t" style="left:168.20px;top:919.40px;font-size:28.05px;line-height:28.05px;color:#22344f;transform:scaleX(0.9178);transform-origin:0 0;-webkit-text-stroke:0.15px #22344f;">Cisco-mds9148-2</div>
<div class="t" style="left:460.00px;top:919.40px;font-size:28.05px;line-height:28.05px;color:#22344f;transform:scaleX(0.9587);transform-origin:0 0;-webkit-text-stroke:0.15px #22344f;">delta-fms-vm4.vfs.stc.us.qsft</div>
<div class="t" style="left:1548.60px;top:919.40px;font-size:28.05px;line-height:28.05px;color:#787878;transform:scaleX(0.9456);transform-origin:0 0;-webkit-text-stroke:0.15px #787878;">n/a</div>
<div class="t" style="left:2276.40px;top:919.40px;font-size:28.05px;line-height:28.05px;color:#22344f;transform:scaleX(0.9630);transform-origin:0 0;-webkit-text-stroke:0.15px #22344f;">4.4.0</div>
<div class="t" style="left:1713.68px;top:919.40px;font-size:28.05px;line-height:28.05px;color:#22344f;transform:scaleX(0.9670);transform-origin:0 0;-webkit-text-stroke:0.15px #22344f;">11/8/16 12:46 AM</div>
<div class="t" style="left:2021.58px;top:919.40px;font-size:28.05px;line-height:28.05px;color:#22344f;transform:scaleX(0.9670);transform-origin:0 0;-webkit-text-stroke:0.15px #22344f;">11/8/16 12:46 AM</div>
<svg style="position:absolute;left:44.00px;top:923.70px" width="30" height="30"><use href="#cbc"/></svg>
<svg style="position:absolute;left:101.00px;top:918.00px" width="38" height="36"><use href="#edit"/></svg>
<svg style="position:absolute;left:997.00px;top:920.00px" width="36" height="34"><use href="#warn"/></svg>
<svg style="position:absolute;left:1140.30px;top:918.60px" width="36" height="36"><use href="#ck"/></svg>
<svg style="position:absolute;left:1342.30px;top:918.60px" width="36" height="36"><use href="#ck"/></svg>
<svg style="position:absolute;left:2403.30px;top:918.60px" width="36" height="36"><use href="#ck"/></svg>
<svg style="position:absolute;left:2575.00px;top:923.00px" width="24.5" height="24.5"><use href="#dl"/></svg>
<div style="position:absolute;left:34px;top:963.1500000000001px;width:2667px;height:49.75px;background:#ffffff"></div>
<div style="position:absolute;left:31px;top:1012.9000000000001px;width:2670px;height:2.7px;background:#d4d4d4"></div>
<div style="position:absolute;left:31px;top:960.45px;width:3px;height:55.15px;background:#d9d9d9"></div>
<div style="position:absolute;left:86.15px;top:960.45px;width:2.8px;height:55.15px;background:#d4d4d4"></div>
<div style="position:absolute;left:156px;top:960.45px;width:2.8px;height:55.15px;background:#d4d4d4"></div>
<div style="position:absolute;left:447.1px;top:960.45px;width:2.8px;height:55.15px;background:#d4d4d4"></div>
<div style="position:absolute;left:921.1px;top:960.45px;width:2.8px;height:55.15px;background:#d4d4d4"></div>
<div style="position:absolute;left:1102.2px;top:960.45px;width:2.8px;height:55.15px;background:#d4d4d4"></div>
<div style="position:absolute;left:1209.1px;top:960.45px;width:2.8px;height:55.15px;background:#d4d4d4"></div>
<div style="position:absolute;left:1505px;top:960.45px;width:2.8px;height:55.15px;background:#d4d4d4"></div>
<div style="position:absolute;left:1623px;top:960.45px;width:2.8px;height:55.15px;background:#d4d4d4"></div>
<div style="position:absolute;left:1931px;top:960.45px;width:2.8px;height:55.15px;background:#d4d4d4"></div>
<div style="position:absolute;left:2239px;top:960.45px;width:2.8px;height:55.15px;background:#d4d4d4"></div>
<div style="position:absolute;left:2369px;top:960.45px;width:2.8px;height:55.15px;background:#d4d4d4"></div>
<div style="position:absolute;left:2467px;top:960.45px;width:2.8px;height:55.15px;background:#d4d4d4"></div>
<div style="position:absolute;left:2701px;top:960.45px;width:2.8px;height:55.15px;background:#d4d4d4"></div>
<div class="t" style="left:168.20px;top:971.90px;font-size:28.05px;line-height:28.05px;color:#22344f;transform:scaleX(0.9258);transform-origin:0 0;-webkit-text-stroke:0.15px #22344f;">Compellent</div>
<div class="t" style="left:460.00px;top:971.90px;font-size:28.05px;line-height:28.05px;color:#22344f;transform:scaleX(0.9587);transform-origin:0 0;-webkit-text-stroke:0.15px #22344f;">delta-fms-vm4.vfs.stc.us.qsft</div>
<div class="t" style="left:1548.60px;top:971.90px;font-size:28.05px;line-height:28.05px;color:#787878;transform:scaleX(0.9456);transform-origin:0 0;-webkit-text-stroke:0.15px #787878;">n/a</div>
<div class="t" style="left:2276.40px;top:971.90px;font-size:28.05px;line-height:28.05px;color:#22344f;transform:scaleX(0.9630);transform-origin:0 0;-webkit-text-stroke:0.15px #22344f;">4.4.0</div>
<div class="t" style="left:1727.24px;top:971.90px;font-size:28.05px;line-height:28.05px;color:#22344f;transform:scaleX(0.9670);transform-origin:0 0;-webkit-text-stroke:0.15px #22344f;">11/9/16 3:49 PM</div>
<div class="t" style="left:2035.14px;top:971.90px;font-size:28.05px;line-height:28.05px;color:#22344f;transform:scaleX(0.9670);transform-origin:0 0;-webkit-text-stroke:0.15px #22344f;">11/9/16 6:49 PM</div>
<svg style="position:absolute;left:44.00px;top:976.20px" width="30" height="30"><use href="#cb"/></svg>
<svg style="position:absolute;left:101.00px;top:970.50px" width="38" height="36"><use href="#edit"/></svg>
<svg style="position:absolute;left:997.30px;top:971.10px" width="36" height="36"><use href="#ck"/></svg>
<svg style="position:absolute;left:1140.30px;top:971.10px" width="36" height="36"><use href="#ck"/></svg>
<svg style="position:absolute;left:1342.30px;top:971.10px" width="36" height="36"><use href="#ck"/></svg>
<svg style="position:absolute;left:2403.30px;top:971.10px" width="36" height="36"><use href="#ck"/></svg>
<svg style="position:absolute;left:2575.00px;top:975.50px" width="24.5" height="24.5"><use href="#dl"/></svg>
<div style="position:absolute;left:34px;top:1015.6000000000001px;width:2667px;height:49.74999999999977px;background:#deeafc"></div>
<div style="position:absolute;left:31px;top:1065.35px;width:2670px;height:2.7px;background:#d4d4d4"></div>
<div style="position:absolute;left:31px;top:1012.9000000000001px;width:3px;height:55.14999999999977px;background:#d9d9d9"></div>
<div style="position:absolute;left:86.15px;top:1012.9000000000001px;width:2.8px;height:55.14999999999977px;background:#d4d4d4"></div>
<div style="position:absolute;left:156px;top:1012.9000000000001px;width:2.8px;height:55.14999999999977px;background:#d4d4d4"></div>
<div style="position:absolute;left:447.1px;top:1012.9000000000001px;width:2.8px;height:55.14999999999977px;background:#d4d4d4"></div>
<div style="position:absolute;left:921.1px;top:1012.9000000000001px;width:2.8px;height:55.14999999999977px;background:#d4d4d4"></div>
<div style="position:absolute;left:1102.2px;top:1012.9000000000001px;width:2.8px;height:55.14999999999977px;background:#d4d4d4"></div>
<div style="position:absolute;left:1209.1px;top:1012.9000000000001px;width:2.8px;height:55.14999999999977px;background:#d4d4d4"></div>
<div style="position:absolute;left:1505px;top:1012.9000000000001px;width:2.8px;height:55.14999999999977px;background:#d4d4d4"></div>
<div style="position:absolute;left:1623px;top:1012.9000000000001px;width:2.8px;height:55.14999999999977px;background:#d4d4d4"></div>
<div style="position:absolute;left:1931px;top:1012.9000000000001px;width:2.8px;height:55.14999999999977px;background:#d4d4d4"></div>
<div style="position:absolute;left:2239px;top:1012.9000000000001px;width:2.8px;height:55.14999999999977px;background:#d4d4d4"></div>
<div style="position:absolute;left:2369px;top:1012.9000000000001px;width:2.8px;height:55.14999999999977px;background:#d4d4d4"></div>
<div style="position:absolute;left:2467px;top:1012.9000000000001px;width:2.8px;height:55.14999999999977px;background:#d4d4d4"></div>
<div style="position:absolute;left:2701px;top:1012.9000000000001px;width:2.8px;height:55.14999999999977px;background:#d4d4d4"></div>
<div class="t" style="left:168.20px;top:1024.40px;font-size:28.05px;line-height:28.05px;color:#22344f;transform:scaleX(0.9220);transform-origin:0 0;-webkit-text-stroke:0.15px #22344f;">Dell-Equallogic</div>
<div class="t" style="left:460.00px;top:1024.40px;font-size:28.05px;line-height:28.05px;color:#22344f;transform:scaleX(0.9587);transform-origin:0 0;-webkit-text-stroke:0.15px #22344f;">delta-fms-vm4.vfs.stc.us.qsft</div>
<div class="t" style="left:1548.60px;top:1024.40px;font-size:28.05px;line-height:28.05px;color:#787878;transform:scaleX(0.9456);transform-origin:0 0;-webkit-text-stroke:0.15px #787878;">n/a</div>
<div class="t" style="left:2276.40px;top:1024.40px;font-size:28.05px;line-height:28.05px;color:#22344f;transform:scaleX(0.9630);transform-origin:0 0;-webkit-text-stroke:0.15px #22344f;">4.4.0</div>
<div class="t" style="left:1727.24px;top:1024.40px;font-size:28.05px;line-height:28.05px;color:#22344f;transform:scaleX(0.9670);transform-origin:0 0;-webkit-text-stroke:0.15px #22344f;">11/9/16 6:48 PM</div>
<div class="t" style="left:2035.14px;top:1024.40px;font-size:28.05px;line-height:28.05px;color:#22344f;transform:scaleX(0.9670);transform-origin:0 0;-webkit-text-stroke:0.15px #22344f;">11/9/16 6:48 PM</div>
<svg style="position:absolute;left:44.00px;top:1028.70px" width="30" height="30"><use href="#cbc"/></svg>
<svg style="position:absolute;left:101.00px;top:1023.00px" width="38" height="36"><use href="#edit"/></svg>
<svg style="position:absolute;left:997.30px;top:1023.60px" width="36" height="36"><use href="#ck"/></svg>
<svg style="position:absolute;left:1140.30px;top:1023.60px" width="36" height="36"><use href="#ck"/></svg>
<svg style="position:absolute;left:1342.30px;top:1023.60px" width="36" height="36"><use href="#ck"/></svg>
<svg style="position:absolute;left:2403.30px;top:1023.60px" width="36" height="36"><use href="#ck"/></svg>
<svg style="position:absolute;left:2575.00px;top:1028.00px" width="24.5" height="24.5"><use href="#dl"/></svg>
<div style="position:absolute;left:34px;top:1068.05px;width:2667px;height:49.75000000000023px;background:#ffffff"></div>
<div style="position:absolute;left:31px;top:1117.8000000000002px;width:2670px;height:2.7px;background:#d4d4d4"></div>
<div style="position:absolute;left:31px;top:1065.35px;width:3px;height:55.150000000000226px;background:#d9d9d9"></div>
<div style="position:absolute;left:86.15px;top:1065.35px;width:2.8px;height:55.150000000000226px;background:#d4d4d4"></div>
<div style="position:absolute;left:156px;top:1065.35px;width:2.8px;height:55.150000000000226px;background:#d4d4d4"></div>
<div style="position:absolute;left:447.1px;top:1065.35px;width:2.8px;height:55.150000000000226px;background:#d4d4d4"></div>
<div style="position:absolute;left:921.1px;top:1065.35px;width:2.8px;height:55.150000000000226px;background:#d4d4d4"></div>
<div style="position:absolute;left:1102.2px;top:1065.35px;width:2.8px;height:55.150000000000226px;background:#d4d4d4"></div>
<div style="position:absolute;left:1209.1px;top:1065.35px;width:2.8px;height:55.150000000000226px;background:#d4d4d4"></div>
<div style="position:absolute;left:1505px;top:1065.35px;width:2.8px;height:55.150000000000226px;background:#d4d4d4"></div>
<div style="position:absolute;left:1623px;top:1065.35px;width:2.8px;height:55.150000000000226px;background:#d4d4d4"></div>
<div style="position:absolute;left:1931px;top:1065.35px;width:2.8px;height:55.150000000000226px;background:#d4d4d4"></div>
<div style="position:absolute;left:2239px;top:1065.35px;width:2.8px;height:55.150000000000226px;background:#d4d4d4"></div>
<div style="position:absolute;left:2369px;top:1065.35px;width:2.8px;height:55.150000000000226px;background:#d4d4d4"></div>
<div style="position:absolute;left:2467px;top:1065.35px;width:2.8px;height:55.150000000000226px;background:#d4d4d4"></div>
<div style="position:absolute;left:2701px;top:1065.35px;width:2.8px;height:55.150000000000226px;background:#d4d4d4"></div>
<div class="t" style="left:168.20px;top:1076.90px;font-size:28.05px;line-height:28.05px;color:#22344f;transform:scaleX(0.8648);transform-origin:0 0;-webkit-text-stroke:0.15px #22344f;">EMC-CLI</div>
<div class="t" style="left:460.00px;top:1076.90px;font-size:28.05px;line-height:28.05px;color:#22344f;transform:scaleX(0.9587);transform-origin:0 0;-webkit-text-stroke:0.15px #22344f;">delta-fms-vm4.vfs.stc.us.qsft</div>
<div class="t" style="left:1548.60px;top:1076.90px;font-size:28.05px;line-height:28.05px;color:#787878;transform:scaleX(0.9456);transform-origin:0 0;-webkit-text-stroke:0.15px #787878;">n/a</div>
<div class="t" style="left:2276.40px;top:1076.90px;font-size:28.05px;line-height:28.05px;color:#22344f;transform:scaleX(0.9630);transform-origin:0 0;-webkit-text-stroke:0.15px #22344f;">4.4.0</div>
<div class="t" style="left:1727.24px;top:1076.90px;font-size:28.05px;line-height:28.05px;color:#22344f;transform:scaleX(0.9670);transform-origin:0 0;-webkit-text-stroke:0.15px #22344f;">11/9/16 3:50 PM</div>
<div class="t" style="left:2035.14px;top:1076.90px;font-size:28.05px;line-height:28.05px;color:#22344f;transform:scaleX(0.9670);transform-origin:0 0;-webkit-text-stroke:0.15px #22344f;">11/9/16 6:49 PM</div>
<svg style="position:absolute;left:44.00px;top:1081.20px" width="30" height="30"><use href="#cb"/></svg>
<svg style="position:absolute;left:101.00px;top:1075.50px" width="38" height="36"><use href="#edit"/></svg>
<svg style="position:absolute;left:997.30px;top:1076.10px" width="36" height="36"><use href="#ck"/></svg>
<svg style="position:absolute;left:1140.30px;top:1076.10px" width="36" height="36"><use href="#ck"/></svg>
<svg style="position:absolute;left:1342.30px;top:1076.10px" width="36" height="36"><use href="#ck"/></svg>
<svg style="position:absolute;left:2403.30px;top:1076.10px" width="36" height="36"><use href="#ck"/></svg>
<svg style="position:absolute;left:2575.00px;top:1080.50px" width="24.5" height="24.5"><use href="#dl"/></svg>
<svg style="position:absolute;left:44.00px;top:719.20px" width="30" height="30"><use href="#cb"/></svg>
<div style="position:absolute;left:2703.8px;top:754px;width:37.19999999999982px;height:365px;background:#fff"></div>
<div style="position:absolute;left:2703.8px;top:752px;width:37.19999999999982px;height:38px;background:linear-gradient(90deg,#e6e6e6,#f4f4f4 30%,#efefef)"></div>
<svg style="position:absolute;left:2715px;top:765px" width="16" height="11" viewBox="0 0 16 11"><path d="M1 10 L8 1.5 L15 10 Z" fill="#4a4a4a"/></svg>
<div style="position:absolute;left:2703.8px;top:790px;width:33.19999999999982px;height:329px;border:2.2px solid #a9b0b8;border-bottom:none;background:linear-gradient(90deg,#fff 0,#fff 8%,#f1f1f1 14%,#eeeeee 85%,#fff 92%);box-sizing:content-box"></div>
<div style="position:absolute;left:2741px;top:602px;width:3px;height:517px;background:#bdbdbd"></div>
<svg style="position:absolute;left:52px;top:616px" width="38" height="38" viewBox="0 0 38 38"><defs><linearGradient id="gadd" x1="0" y1="0" x2="0" y2="1"><stop offset="0" stop-color="#9ee0b0"/><stop offset="0.3" stop-color="#22a848"/><stop offset="0.7" stop-color="#0e9a3a"/><stop offset="1" stop-color="#34d050"/></linearGradient></defs>
<circle cx="19" cy="18.6" r="17" fill="url(#gadd)" stroke="#138a30" stroke-width="1.4"/>
<path d="M19.3 11.5 V26 M12 18.8 H26.6" stroke="#fff" stroke-width="4.8"/></svg>
<svg style="position:absolute;left:157px;top:613px" width="44" height="44" viewBox="0 0 44 44"><defs><linearGradient id="grf1" x1="0" y1="0" x2="0" y2="1"><stop offset="0" stop-color="#9ad89a"/><stop offset="1" stop-color="#3f9a44"/></linearGradient>
<linearGradient id="grf2" x1="0" y1="0" x2="0" y2="1"><stop offset="0" stop-color="#4aa24e"/><stop offset="0.5" stop-color="#8ccf8c"/><stop offset="1" stop-color="#56ac58"/></linearGradient></defs>
<g opacity="0.95"><path d="M5.5 19.5 Q7.5 11.5 17 11.5 H26" fill="none" stroke="url(#grf1)" stroke-width="8.5"/>
<path d="M25 2.1 L35 11.5 L25 21 Z" fill="#5cb45e"/>
<path d="M36.5 24 Q34.5 31.5 25 31.5 H16" fill="none" stroke="url(#grf2)" stroke-width="8.5"/>
<path d="M17 22 L7.4 31.5 L17 41.5 Z" fill="#6cbc6c"/></g></svg>
<svg style="position:absolute;left:333px;top:613px" width="40" height="42" viewBox="0 0 40 42"><defs><linearGradient id="gpw" x1="0" y1="0" x2="0" y2="1"><stop offset="0" stop-color="#1f6fd0"/><stop offset="1" stop-color="#3aa6f4"/></linearGradient></defs>
<path d="M11.6 10 A14.8 14.8 0 1 0 28.8 10" fill="none" stroke="#2f8ee6" stroke-width="5" stroke-linecap="round"/>
<rect x="17.4" y="2.3" width="5.3" height="24.5" fill="url(#gpw)"/></svg>
<svg style="position:absolute;left:489px;top:616px" width="40" height="38" viewBox="0 0 40 38"><circle cx="20" cy="19.1" r="14.8" fill="none" stroke="#a3adb8" stroke-width="4.8"/>
<rect x="17.4" y="11.2" width="5" height="17" rx="1" fill="#a3adb8"/></svg>
<svg style="position:absolute;left:678px;top:616px" width="34" height="36" viewBox="0 0 34 36"><defs><linearGradient id="gst" x1="0" y1="0" x2="0" y2="1"><stop offset="0" stop-color="#3fae2a"/><stop offset="0.5" stop-color="#60d040"/><stop offset="1" stop-color="#2a8a1a"/></linearGradient></defs>
<path d="M3 2 L31 17.5 L3 33.5 Z" fill="url(#gst)" stroke="#2a7a1c" stroke-width="1" stroke-linejoin="round"/></svg>
<svg style="position:absolute;left:982px;top:619px" width="32" height="32" viewBox="0 0 32 32"><defs><linearGradient id="gsp" x1="0" y1="0" x2="0" y2="1"><stop offset="0" stop-color="#9a1a1a"/><stop offset="0.55" stop-color="#c42424"/><stop offset="1" stop-color="#f04848"/></linearGradient></defs>
<rect x="1.5" y="1.5" width="27.5" height="27.5" rx="3" fill="url(#gsp)" stroke="#8a1414" stroke-width="1"/>
<rect x="4" y="4" width="22.5" height="4" fill="#c06060" opacity="0.6"/></svg>
<svg style="position:absolute;left:1281px;top:616px" width="38" height="38" viewBox="0 0 38 38"><defs><radialGradient id="grm" cx="0.45" cy="0.35" r="0.7"><stop offset="0" stop-color="#ff9a80"/><stop offset="0.5" stop-color="#e83a2a"/><stop offset="1" stop-color="#b81a14"/></radialGradient></defs>
<circle cx="19" cy="19" r="16.8" fill="url(#grm)" stroke="#c02a20" stroke-width="1"/>
<rect x="9.5" y="15.8" width="19" height="6.4" fill="#fff"/></svg>
<svg style="position:absolute;left:1512px;top:613px" width="44" height="44" viewBox="0 0 44 44"><defs><linearGradient id="gup" x1="0" y1="0" x2="0" y2="1"><stop offset="0" stop-color="#8ab8ff"/><stop offset="0.5" stop-color="#4a88f0"/><stop offset="1" stop-color="#1f5ed8"/></linearGradient></defs>
<path d="M21 1.5 L41.5 21 H30.5 V41.5 H11.5 V21 H1.5 Z" fill="url(#gup)" stroke="#2a62c8" stroke-width="0.8" stroke-linejoin="round"/></svg>
</body></html>
